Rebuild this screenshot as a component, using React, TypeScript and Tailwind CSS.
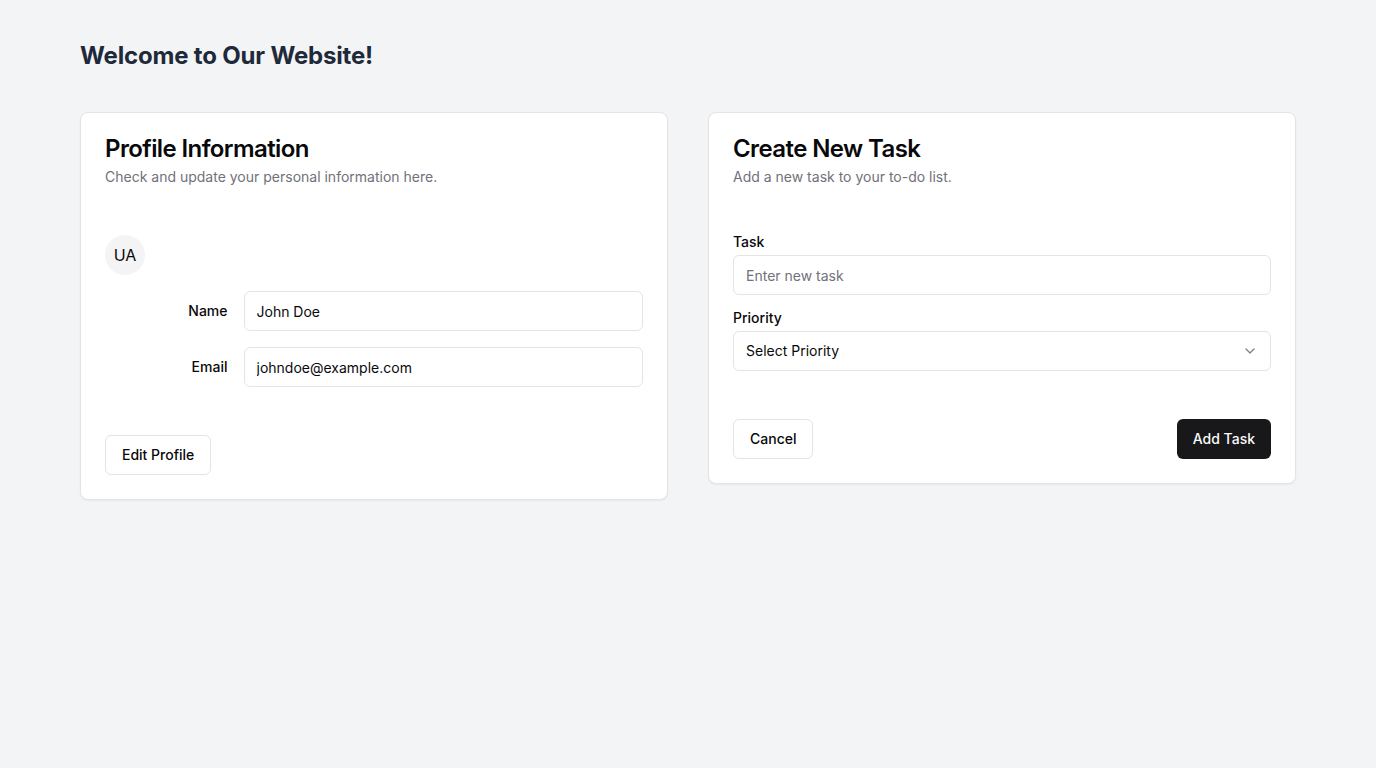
import { ChevronDown } from "lucide-react";

function Card({ children }: { children: React.ReactNode }) {
	return (
		<div className="rounded-lg border border-[#e4e4e7] bg-white text-[#09090b] shadow-xs">
			{children}
		</div>
	);
}

function CardHeader({ title, desc }: { title: string; desc: string }) {
	return (
		<div className="flex flex-col gap-1.5 p-6">
			<h3 className="text-2xl leading-none font-semibold tracking-tight">{title}</h3>
			<p className="text-sm text-[#71717a]">{desc}</p>
		</div>
	);
}

const inputCls =
	"flex h-10 w-full rounded-md border border-[#e4e4e7] bg-white px-3 py-2 text-sm text-[#09090b] placeholder:text-[#71717a] outline-none";

export default function App() {
	return (
		<div className="min-h-screen bg-gray-100 px-20 py-10 font-['Inter',sans-serif]">
			<h1 className="mb-10 text-2xl font-bold tracking-[-0.18px] text-gray-800">
				Welcome to Our Website!
			</h1>
			<div className="grid grid-cols-2 items-start gap-10">
				<Card>
					<CardHeader
						title="Profile Information"
						desc="Check and update your personal information here."
					/>
					<div className="px-6 pb-6">
						<div className="grid gap-4 py-6">
							<div className="flex h-10 w-10 items-center justify-center rounded-full bg-[#f4f4f5] text-base">
								UA
							</div>
							<div className="grid grid-cols-4 items-center gap-4">
								<label className="text-right text-sm font-medium">Name</label>
								<input className={inputCls + " col-span-3"} defaultValue="John Doe" />
							</div>
							<div className="grid grid-cols-4 items-center gap-4">
								<label className="text-right text-sm font-medium">Email</label>
								<input
									className={inputCls + " col-span-3"}
									defaultValue="johndoe@example.com"
								/>
							</div>
						</div>
					</div>
					<div className="flex items-center px-6 pb-6">
						<button className="h-10 rounded-md border border-[#e4e4e7] bg-white px-4 text-sm font-medium">
							Edit Profile
						</button>
					</div>
				</Card>

				<Card>
					<CardHeader title="Create New Task" desc="Add a new task to your to-do list." />
					<div className="px-6 pb-6">
						<div className="grid gap-4 py-6">
							<div className="flex flex-col gap-1.5">
								<label className="text-sm leading-none font-medium">Task</label>
								<input className={inputCls} placeholder="Enter new task" />
							</div>
							<div className="flex flex-col gap-1.5">
								<label className="text-sm leading-none font-medium">Priority</label>
								<button className="flex h-10 w-full items-center justify-between rounded-md border border-[#e4e4e7] bg-white px-3 py-2 text-sm">
									<span>Select Priority</span>
									<ChevronDown className="h-4 w-4 opacity-50" />
								</button>
							</div>
						</div>
					</div>
					<div className="flex items-center justify-between px-6 pb-6">
						<button className="h-10 rounded-md border border-[#e4e4e7] bg-white px-4 text-sm font-medium">
							Cancel
						</button>
						<button className="h-10 rounded-md bg-[#18181b] px-4 text-sm font-medium text-[#fafafa]">
							Add Task
						</button>
					</div>
				</Card>
			</div>
		</div>
	);
}
